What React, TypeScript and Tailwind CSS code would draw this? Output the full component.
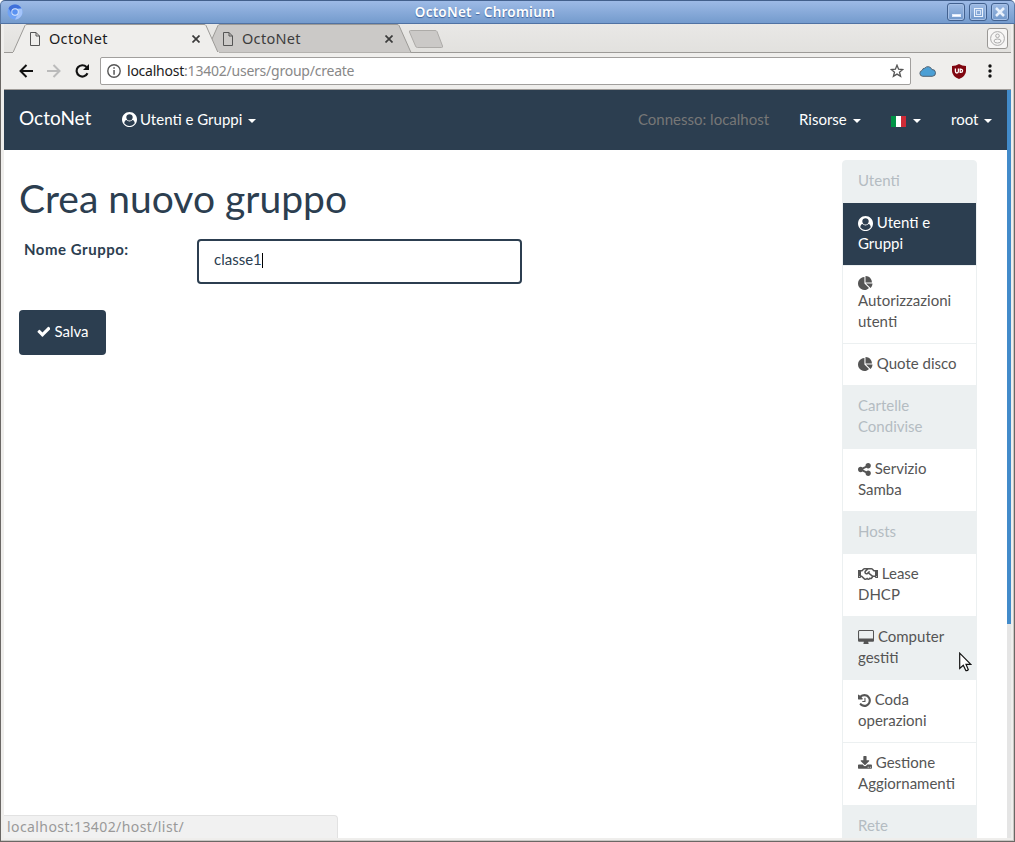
import type { ReactNode } from "react";
import { FaRegHandshake } from "react-icons/fa";

const icons = {
  user: "M1523 1339q-22-155-87.500-257.500t-184.500-118.500q-67 74-159.500 115.500t-195.500 41.500-195.500-41.500-159.500-115.500q-119 16-184.500 118.500t-87.500 257.500q106 150 271 237.500t356 87.500 356-87.500 271-237.500zm-243-699q0-159-112.500-271.500t-271.500-112.500-271.500 112.500-112.500 271.500 112.500 271.500 271.500 112.500 271.500-112.500 112.500-271.500zm512 256q0 182-71 347.500t-190.500 286-285.500 191.500-349 71q-182 0-348-71t-286-191-191-286-71-348 71-348 191-286 286-191 348-71 348 71 286 191 191 286 71 348z",
  pie: "M768 890l546 546q-106 108-247.500 168t-298.500 60q-209 0-385.500-103t-279.500-279.500-103-385.500 103-385.500 279.500-279.500 385.500-103v762zm187 6h773q0 157-60 298.500t-168 247.500zm709-128h-768v-768q209 0 385.500 103t279.500 279.500 103 385.500z",
  check: "M1671 566q0 40-28 68l-724 724-136 136q-28 28-68 28t-68-28l-136-136-362-362q-28-28-28-68t28-68l136-136q28-28 68-28t68 28l294 295 656-657q28-28 68-28t68 28l136 136q28 28 28 68z",
  share: "M1344 1024q133 0 226.500 93.500t93.500 226.500-93.500 226.500-226.500 93.500-226.500-93.500-93.500-226.500q0-12 2-34l-360-180q-92 86-218 86-133 0-226.500-93.500t-93.500-226.500 93.500-226.500 226.500-93.500q126 0 218 86l360-180q-2-22-2-34 0-133 93.500-226.500t226.500-93.500 226.500 93.500 93.500 226.500-93.500 226.500-226.500 93.500q-126 0-218-86l-360 180q2 22 2 34t-2 34l360 180q92-86 218-86z",
  desktop: "M1728 992v-832q0-13-9.500-22.500t-22.500-9.500h-1600q-13 0-22.500 9.500t-9.500 22.500v832q0 13 9.500 22.500t22.500 9.500h1600q13 0 22.500-9.500t9.500-22.500zm128-832v1088q0 66-47 113t-113 47h-544q0 37 16 77.500t32 71 16 43.500q0 26-19 45t-45 19h-512q-26 0-45-19t-19-45q0-14 16-44t32-70 16-78h-544q-66 0-113-47t-47-113v-1088q0-66 47-113t113-47h1600q66 0 113 47t47 113z",
  history: "M1664 896q0 156-61 298t-164 245-245 164-298 61q-172 0-327-72.500t-264-204.500q-7-10-6.500-22.500t8.500-20.500l137-138q10-9 25-9 16 2 23 12 73 95 179 147t225 52q104 0 198.500-40.500t163.500-109.500 109.500-163.500 40.500-198.500-40.500-198.500-109.500-163.500-163.500-109.500-198.500-40.500q-98 0-188 35.500t-160 101.500l137 138q31 30 14 69-17 40-59 40h-448q-26 0-45-19t-19-45v-448q0-42 40-59 39-17 69 14l130 129q107-101 244.500-156.500t284.500-55.500q156 0 298 61t245 164 164 245 61 298zm-640-288v448q0 14-9 23t-23 9h-320q-14 0-23-9t-9-23v-64q0-14 9-23t23-9h224v-352q0-14 9-23t23-9h64q14 0 23 9t9 23z",
  download: "M1344 1344q0-26-19-45t-45-19-45 19-19 45 19 45 45 19 45-19 19-45zm256 0q0-26-19-45t-45-19-45 19-19 45 19 45 45 19 45-19 19-45zm128-224v320q0 40-28 68t-68 28h-1472q-40 0-68-28t-28-68v-320q0-40 28-68t68-28h465l135 136q58 56 136 56t136-56l136-136h464q40 0 68 28t28 68zm-325-569q17 41-14 70l-448 448q-18 19-45 19t-45-19l-448-448q-31-29-14-70 17-39 59-39h256v-448q0-26 19-45t45-19h256q26 0 45 19t19 45v448h256q42 0 59 39z",
};

// viewBox per glyph, 1792 units = 15px
const boxes = {
  user: "0 0 1792 1792",
  pie: "0 0 1792 1792",
  check: "64 0 1664 1792",
  share: "128 0 1536 1792",
  desktop: "-64 0 1920 1792",
  history: "128 0 1536 1792",
  download: "64 0 1664 1792",
};

function Icon({ name, className = "" }: { name: keyof typeof icons; className?: string }) {
  return (
    <svg viewBox={boxes[name]} fill="currentColor" className={`inline-block h-[15px] w-auto align-[-3px] ${className}`}>
      <path d={icons[name]} />
    </svg>
  );
}

function Caret() {
  return (
    <svg width="8" height="4" viewBox="0 0 8 4" fill="currentColor" className="mt-[4px] shrink-0">
      <path d="M0 0h8L4 4z" />
    </svg>
  );
}

function Tab({ active = false }: { active?: boolean }) {
  return (
    <div className={`relative flex h-[29px] w-[205px] shrink-0 items-center pl-[17px] pr-[18px] ${active ? "z-10" : "-ml-[12px]"}`}>
      <svg width="207" height="29" viewBox="0 0 207 29" className="absolute left-0 top-0">
        <path d="M0 28.500L12 1.500Q12.500 .5 14 .5H191Q192.500 .5 193 1.500L205 28.500" fill={active ? "#efeeec" : "#cbc9c7"} stroke="#9c9a97" />
        {active && <path d="M0 28.500H206" stroke="#efeeec" />}
      </svg>
      <svg width="10" height="14" viewBox="0 0 10 14" fill="none" stroke="#555" className="relative shrink-0">
        <path d="M.5 .5H6L9.500 4V13.500H.5zM6 .5V4H9.500" />
      </svg>
      <span className={`relative ml-[9px] text-[14.5px] tracking-[0.3px] ${active ? "text-[#1c1c1c]" : "text-[#3c3c3c]"}`}>OctoNet</span>
      <svg width="8" height="8" viewBox="0 0 8 8" stroke="#3b3b3b" strokeWidth="1.7" className="relative ml-auto">
        <path d="M.5 .5l7 7M7.500 .5l-7 7" />
      </svg>
    </div>
  );
}

function WindowButton({ children }: { children: ReactNode }) {
  return (
    <div className="flex h-[18px] w-[18px] items-center justify-center rounded-[3px] border border-[#42618f] bg-gradient-to-b from-[#9dbae4] to-[#7299cb] text-[#e9f1fc] shadow-[inset_0_0_0_1px_#a6c0e6]">
      {children}
    </div>
  );
}

function TitleBar() {
  return (
    <div className="flex h-6 shrink-0 items-center rounded-t-[5px] border border-b-[#5072a3] border-t-[#43608c] border-x-[#5878a6] bg-gradient-to-b from-[#9dbae6] to-[#749bcd] pl-[6px] pr-[5px]">
      <svg width="16" height="16" viewBox="0 0 16 16">
        <circle cx="8" cy="8" r="7.500" fill="#6fa2f4" />
        <path d="M1.500 4.200A7.500 7.500 0 0 1 14.500 4.500H8L4.800 9.500z" fill="#3f6fd9" />
        <path d="M14.600 4.500A7.500 7.500 0 0 1 8 15.500L11.200 9.600 11 5z" fill="#a4c4fa" />
        <circle cx="8" cy="8" r="3.700" fill="#dbe8fd" />
        <circle cx="8" cy="8" r="2.800" fill="#5a92f2" />
      </svg>
      <div className="flex-1 text-center text-[13.5px] font-semibold leading-5 tracking-[0.24px] text-white [text-shadow:0_1px_1px_#3f629b]">OctoNet - Chromium</div>
      <div className="flex gap-[4px]">
        <WindowButton><div className="mt-[6px] h-[3px] w-[9px] border border-[#dfeafb] bg-white" /></WindowButton>
        <WindowButton><div className="h-[9px] w-[9px] border border-[#eaf2fd] p-[1px]"><div className="h-full border border-[#d3e2f7]" /></div></WindowButton>
        <WindowButton>
          <svg width="10" height="10" viewBox="0 0 10 10" stroke="currentColor" strokeWidth="2.500"><path d="M1 1l8 8M9 1L1 9" /></svg>
        </WindowButton>
      </div>
    </div>
  );
}

function Toolbar() {
  return (
    <div className="flex h-[37px] shrink-0 items-center border-b border-[#a09d9a] bg-[#efeeec] pl-[15px] pr-[17px]">
      <svg width="14" height="14" viewBox="0 0 14 14" fill="none" stroke="#111" strokeWidth="2"><path d="M14 7H1.500M7.500 1L1.500 7l6 6" /></svg>
      <svg width="14" height="14" viewBox="0 0 14 14" fill="none" stroke="#bbb" strokeWidth="2" className="ml-[14px]"><path d="M0 7h12.500M6.500 1l6 6-6 6" /></svg>
      <svg width="15" height="14" viewBox="0 0 15 14" className="ml-[14px]">
        <path d="M12.500 9.300A5.700 5.700 0 1 1 11.500 3" fill="none" stroke="#111" strokeWidth="2.100" />
        <path d="M14 0v6H8z" fill="#111" />
      </svg>
      <div className="ml-[10px] flex h-[28px] w-[811px] items-center rounded-[2px] border border-[#a19f9d] bg-white pl-[6px] pr-[6px]">
        <svg width="14" height="14" viewBox="0 0 14 14">
          <circle cx="7" cy="7" r="6.200" fill="none" stroke="#555" strokeWidth="1.400" />
          <path d="M6.300 3.200h1.500v1.600H6.300zM6.300 6h1.500v4.800H6.300z" fill="#555" />
        </svg>
        <div className="ml-[6px] flex-1 pb-[2px] text-[14px] tracking-[-0.23px] text-[#888]"><span className="text-[#1c1c1c]">localhost</span>:13402/users/group/create</div>
        <svg width="14" height="14" viewBox="0 0 14 14" fill="none" stroke="#555" strokeWidth="1.300">
          <path d="M7 1.200l1.600 4 4.200.3-3.300 2.700 1.100 4.200L7 10.100l-3.600 2.300 1.100-4.200L1.200 5.500l4.200-.3z" />
        </svg>
      </div>
      <svg width="17" height="12" viewBox="0 0 17 12" className="ml-[8px]">
        <path d="M3.600 11.300A3 3 0 0 1 3.200 5.400 2.600 2.600 0 0 1 5.800 3.200 4 4 0 0 1 12.800 4.500 3.400 3.400 0 0 1 13.400 11.300z" fill="#4b9fd5" stroke="#4f6273" />
      </svg>
      <svg width="14" height="15" viewBox="0 0 14 15" className="ml-[16px]">
        <path d="M7 0q3 2 7 2v5q0 5-7 8-7-3-7-8V2q4 0 7-2z" fill="#800610" />
        <path d="M3.400 4.500V7.300Q3.400 9 4.900 9T6.400 7.300V4.500M8.200 5.100V8.400H8.800Q10.600 8.400 10.600 6.800T8.800 5.100z" fill="none" stroke="#fff" strokeWidth="1.300" />
      </svg>
      <svg width="4" height="14" viewBox="0 0 4 14" fill="#111" className="ml-auto mr-[2px]">
        <circle cx="2" cy="2" r="1.700" /><circle cx="2" cy="7" r="1.700" /><circle cx="2" cy="12" r="1.700" />
      </svg>
    </div>
  );
}

function Navbar() {
  return (
    <nav className="flex h-[60px] shrink-0 items-center bg-[#2c3e50] pb-[2px] pl-[15px] text-[15px] text-white">
      <div className="w-[103px] pb-[1px] text-[19px]">OctoNet</div>
      <div className="flex items-center">
        <Icon name="user" />
        <span className="ml-[3px] mr-[6px]">Utenti e Gruppi</span>
        <Caret />
      </div>
      <div className="ml-auto flex items-center">
        <span className="w-[161px] text-[#777]">Connesso: localhost</span>
        <div className="flex w-[92px] items-center gap-[6px]">Risorse <Caret /></div>
        <div className="flex w-[60px] items-center gap-[7px]">
          <div className="mt-[4px] flex h-[11px] w-[15px]">
            <div className="flex-1 bg-[#009246]" /><div className="flex-1 bg-white" /><div className="flex-1 bg-[#ce2b37]" />
          </div>
          <Caret />
        </div>
        <div className="flex w-[56px] items-center gap-[6px]">root <Caret /></div>
      </div>
    </nav>
  );
}

function Header({ children, first = false }: { children: ReactNode; first?: boolean }) {
  return (
    <div className={`-mb-px border border-[#ecf0f1] bg-[#ecf0f1] px-[15px] pb-[11px] pt-[9px] text-[#b4bcc2] ${first ? "rounded-t-[4px]" : ""}`}>
      {children}
    </div>
  );
}

function Item({ children, className = "border-[#ecf0f1] bg-white text-[#555]" }: { children: ReactNode; className?: string }) {
  return <a className={`-mb-px block border px-[15px] pb-[11px] pt-[9px] ${className}`}>{children}</a>;
}

function Sidebar() {
  return (
    <aside className="mt-[10px] w-[135px] shrink-0 text-[15px] leading-[21px]">
      <Header first>Utenti</Header>
      <Item className="border-[#ecf0f1] bg-[#2c3e50] text-white"><Icon name="user" /> Utenti e<br />Gruppi</Item>
      <Item><Icon name="pie" className="!block translate-y-px" />Autorizzazioni<br />utenti</Item>
      <Item><Icon name="pie" /> Quote disco</Item>
      <Header>Cartelle<br />Condivise</Header>
      <Item><Icon name="share" /> Servizio<br />Samba</Item>
      <Header>Hosts</Header>
      <Item><FaRegHandshake className="inline-block h-[16px] w-[20px] align-[-3px]" /> Lease<br />DHCP</Item>
      <Item className="border-[#ecf0f1] bg-[#ecf0f1] text-[#555]"><Icon name="desktop" /> Computer<br />gestiti</Item>
      <Item><Icon name="history" /> Coda<br />operazioni</Item>
      <Item><Icon name="download" /> Gestione<br />Aggiornamenti</Item>
      <Header>Rete</Header>
    </aside>
  );
}

function GroupForm() {
  return (
    <main className="flex-1 pl-[15px] pt-[27px] text-[15px] text-[#2c3e50]">
      <h1 className="text-[39px] leading-[43px]">Crea nuovo gruppo</h1>
      <div className="mt-[19px] flex">
        <label className="w-[178px] pl-[5px] font-bold leading-[21px] tracking-[0.52px]">Nome Gruppo:</label>
        <div className="flex h-[45px] w-[325px] items-center rounded-[4px] border-2 border-[#2c3e50] pb-[4px] pl-[15px]">
          classe1<span className="mt-[2px] h-[15px] w-px bg-black" />
        </div>
      </div>
      <button className="mt-[26px] flex h-[45px] w-[87px] items-center justify-center gap-[4px] rounded-[4px] bg-[#2c3e50] pb-[2px] text-white">
        <Icon name="check" />Salva
      </button>
    </main>
  );
}

export default function App() {
  return (
    <div className="relative flex h-[842px] w-[1015px] flex-col overflow-hidden bg-white font-['Noto_Sans',sans-serif]">
      <TitleBar />
      <div className="flex min-h-0 flex-1 flex-col border-x border-b border-[#6a6764] bg-[#efeeec] pb-[3px] pl-[3px] pr-[3px] shadow-[inset_-1px_-1px_0_#c9c7c4]">
        <div className="flex h-[29px] shrink-0 bg-gradient-to-b from-[#e9e8e6] to-[#e2e1de] pl-[9px] shadow-[inset_0_-1px_0_#9c9a97]">
          <Tab active />
          <Tab />
          <svg width="36" height="20" viewBox="0 0 36 20" className="-ml-[3px] mt-[6px]">
            <path d="M2.500 .5H27Q28.500 .5 29 1.500L34.500 16Q35 17.500 33.500 17.500H9.500Q8 17.500 7.500 16L1.500 2Q1 .5 2.500 .5z" fill="#cbc9c7" stroke="#adaba8" />
          </svg>
          <div className="ml-auto mr-[3px] mt-[4px] flex h-[21px] w-[21px] items-center justify-center rounded-[3px] border border-[#9a9895] bg-[#f7f6f5]">
            <svg width="15" height="15" viewBox="0 0 15 15" fill="none" stroke="#aaa">
              <circle cx="7.500" cy="7.500" r="6.900" /><circle cx="7.500" cy="4.800" r="1.800" /><ellipse cx="7.500" cy="10" rx="3.500" ry="2" />
            </svg>
          </div>
        </div>
        <Toolbar />
        <div className="flex min-h-0 flex-1">
          <div className="flex min-w-0 flex-1 flex-col overflow-hidden bg-white font-[Lato,sans-serif]">
            <Navbar />
            <div className="flex min-h-0 flex-1 pr-[30px]">
              <GroupForm />
              <Sidebar />
            </div>
          </div>
          <div className="w-[4px] shrink-0 bg-[#e5e5e5]"><div className="h-[534px] bg-[#428bca]" /></div>
        </div>
      </div>
      <div className="absolute bottom-[4px] left-[4px] h-[23px] w-[334px] rounded-tr-[4px] border-r border-t border-[#e2e2e2] bg-[#f1f1f1] pl-[3px] text-[14px] leading-[22px] tracking-[0.41px] text-[#999]">
        localhost:13402/host/list/
      </div>
      <svg width="13" height="20" viewBox="0 0 13 20" className="absolute left-[959px] top-[652px]">
        <path d="M.7 1.200V16.500L4.300 13.300 6.800 18.600Q8.500 19 9.300 17.600L7 12.300H11.800z" fill="#fff" stroke="#111" strokeWidth="1.200" />
      </svg>
    </div>
  );
}
